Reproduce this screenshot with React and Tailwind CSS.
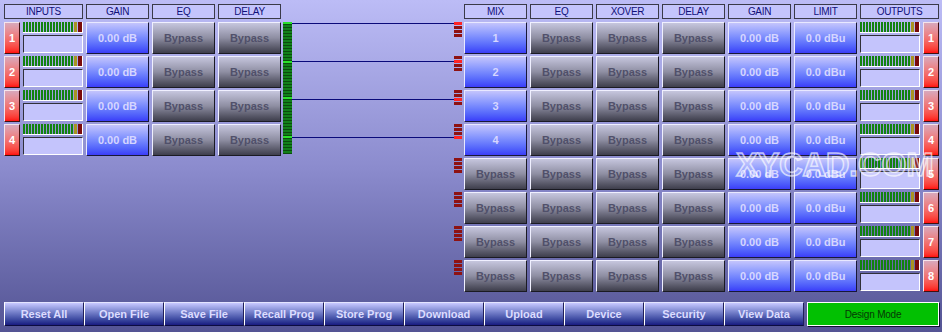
import React from "react";

const font = { fontFamily: '"Liberation Sans", Arial, sans-serif' };

const headCls =
  "h-[15px] shrink-0 flex items-center justify-center border border-[#3a3a48] bg-[#c4c4fc] text-[10px] tracking-[-0.3px] text-[#10107a] leading-none";

const gainCls =
  "h-[32px] w-[63px] shrink-0 flex items-center justify-center border-t border-l border-t-[#e8e8ff] border-l-[#e8e8ff] border-b border-r border-b-[#181838] border-r-[#181838] bg-gradient-to-b from-[#c4c4fc] to-[#3c3cf8] text-[11px] font-bold text-[#d6d6ff]";

const bypassCls =
  "h-[32px] w-[63px] shrink-0 flex items-center justify-center border-t border-l border-t-[#f0f0ff] border-l-[#f0f0ff] border-b border-r border-b-[#1a1a22] border-r-[#1a1a22] bg-gradient-to-b from-[#c6c6de] via-[#8e8ea2] to-[#3e3e4c] text-[11px] font-bold text-[#50506a]";

const numCls =
  "h-[32px] w-[16px] shrink-0 flex items-center justify-center border-t border-l border-t-[#f4e4ec] border-l-[#f4e4ec] border-b border-r border-b-[#401010] border-r-[#401010] bg-gradient-to-b from-[#d8a8bc] to-[#ff0a0a] text-[11px] font-bold text-white";

const barCls =
  "h-[24px] w-[80px] shrink-0 flex items-center justify-center border-l border-l-white border-t border-t-[#e4e4ff] border-r border-r-[#20205a] border-b border-b-[#0c0c40] bg-gradient-to-b from-[#c8c8ff] to-[#1a1a80] text-[11px] font-bold text-[#dcdcff]";

function Meter() {
  return (
    <div className="w-[60px] h-[32px] shrink-0 flex flex-col gap-[2px]">
      <div className="h-[11px] flex gap-[1px] border-r border-b border-r-white border-b-white">
        {Array.from({ length: 17 }).map((_, i) => (
          <div key={i} className="w-[2px] h-full bg-[#12820f]" />
        ))}
        <div className="w-[3px] h-full bg-[#a89422]" />
        <div className="w-[4px] h-full bg-[#7a0a0a]" />
      </div>
      <div className="h-[18px] bg-[#c4c4fc] border-t border-l border-t-[#303038] border-l-[#303038] border-b border-r border-b-white border-r-white" />
    </div>
  );
}

function Routing() {
  const green = Array.from({ length: 44 }, (_, i) => i);
  const bright = [0, 13, 25, 38];
  const lines = [19.5, 57.5, 95.5, 133.5];
  return (
    <svg width="183" height="288" className="shrink-0">
      <rect x="2" y="18" width="9" height="132" fill="#0a4c0c" />
      {green.map((i) => (
        <rect
          key={i}
          x="2"
          y={18 + i * 3}
          width="9"
          height="2"
          fill={bright.includes(i) ? "#2ae02a" : "#12801a"}
        />
      ))}
      {lines.map((y, i) => (
        <line key={i} x1="11" x2="173" y1={y} y2={y} stroke="#0a0a7a" strokeWidth="1" />
      ))}
      {Array.from({ length: 8 }).map((_, r) =>
        [0, 1, 2, 3].map((s) => (
          <rect
            key={r + "-" + s}
            x="173"
            y={18 + r * 34 + s * 4}
            width="8"
            height="3"
            fill={r < 4 && s === r ? "#ff2424" : "#8e1212"}
          />
        ))
      )}
    </svg>
  );
}

export default function App() {
  const outs = [1, 2, 3, 4, 5, 6, 7, 8];
  const bar = [
    "Reset All",
    "Open File",
    "Save File",
    "Recall Prog",
    "Store Prog",
    "Download",
    "Upload",
    "Device",
    "Security",
    "View Data",
  ];
  return (
    <div
      className="relative w-[942px] h-[332px] overflow-hidden bg-gradient-to-b from-[#bcbcf6] via-[#8c8cce] to-[#545494] pt-[4px] pl-[4px]"
      style={font}
    >
      <div className="flex items-start">
        {/* inputs */}
        <div className="flex flex-col w-[277px] shrink-0">
          <div className="flex gap-[3px]">
            <div className={headCls + " w-[79px]"}>INPUTS</div>
            <div className={headCls + " w-[63px]"}>GAIN</div>
            <div className={headCls + " w-[63px]"}>EQ</div>
            <div className={headCls + " w-[63px]"}>DELAY</div>
          </div>
          <div className="mt-[3px] flex flex-col gap-[2px]">
            {[1, 2, 3, 4].map((n) => (
              <div key={n} className="flex gap-[3px]">
                <div className={numCls}>{n}</div>
                <Meter />
                <div className={gainCls}>0.00 dB</div>
                <div className={bypassCls}>Bypass</div>
                <div className={bypassCls}>Bypass</div>
              </div>
            ))}
          </div>
        </div>

        <Routing />

        {/* outputs */}
        <div className="flex flex-col shrink-0">
          <div className="flex gap-[3px]">
            <div className={headCls + " w-[63px]"}>MIX</div>
            <div className={headCls + " w-[63px]"}>EQ</div>
            <div className={headCls + " w-[63px]"}>XOVER</div>
            <div className={headCls + " w-[63px]"}>DELAY</div>
            <div className={headCls + " w-[63px]"}>GAIN</div>
            <div className={headCls + " w-[63px]"}>LIMIT</div>
            <div className={headCls + " w-[79px]"}>OUTPUTS</div>
          </div>
          <div className="mt-[3px] flex flex-col gap-[2px]">
            {outs.map((n) => (
              <div key={n} className="flex gap-[3px]">
                <div className={n <= 4 ? gainCls : bypassCls}>{n <= 4 ? n : "Bypass"}</div>
                <div className={bypassCls}>Bypass</div>
                <div className={bypassCls}>Bypass</div>
                <div className={bypassCls}>Bypass</div>
                <div className={gainCls}>0.00 dB</div>
                <div className={gainCls}>0.0 dBu</div>
                <Meter />
                <div className={numCls}>{n}</div>
              </div>
            ))}
          </div>
        </div>
      </div>

      {/* bottom bar */}
      <div className="mt-[10px] flex">
        {bar.map((b) => (
          <div key={b} className={barCls}>
            {b}
          </div>
        ))}
        <div className="ml-[3px] h-[24px] w-[132px] flex items-center justify-center bg-[#02c002] border border-white shadow-[1px_1px_0_#101030] text-[10px] tracking-[-0.2px] text-[#063806]">
          Design Mode
        </div>
      </div>

      <div className="absolute left-[736px] top-[148px] text-[33px] font-bold leading-none tracking-[-0.5px] text-[rgba(255,255,255,0.18)] [-webkit-text-stroke:1.5px_rgba(255,255,255,0.65)] pointer-events-none">
        XYCAD.COM
      </div>
    </div>
  );
}
